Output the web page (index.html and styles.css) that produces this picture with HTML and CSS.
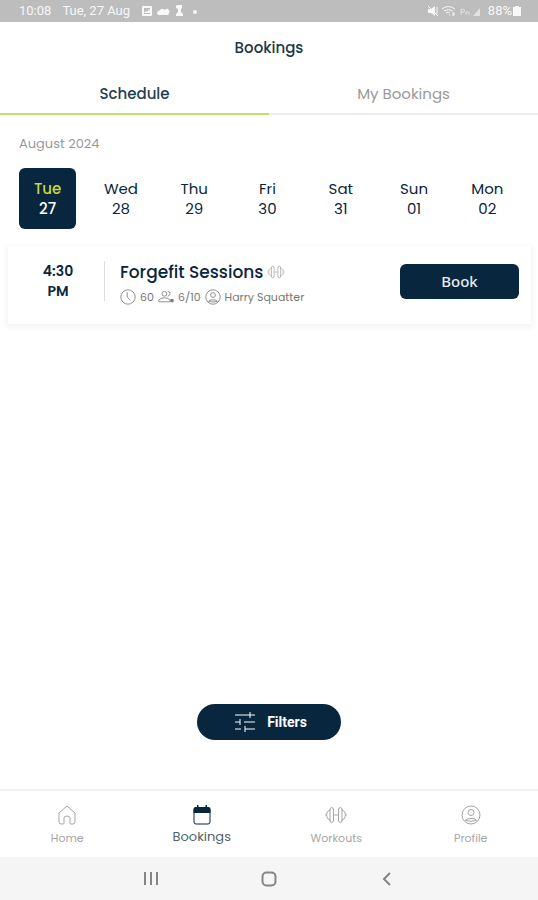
FILE: index.html
```html
<!DOCTYPE html>
<html lang="en">
<head>
<meta charset="utf-8">
<meta name="viewport" content="width=device-width, initial-scale=1">
<title>Bookings</title>
<link rel="stylesheet" href="styles.css">
</head>
<body>
<svg class="defs" aria-hidden="true">
  <symbol id="dumbbell" viewBox="0 0 22 18">
    <path d="M8.500 9h5M8.500 3.500v11M13.500 3.500v11M5 3v12M17 3v12M5 4q0-2.500 1.750-2.500T8.500 4M5 14q0 2.500 1.750 2.500T8.500 14M13.500 4q0-2.500 1.750-2.500T17 4M13.500 14q0 2.500 1.750 2.500T17 14M5 4Q1.500 5 1.500 9T5 14M17 4q3.500 1 3.500 5T17 14M0 9h1.500M20.500 9H22"/>
  </symbol>
  <symbol id="person" viewBox="0 0 20 20">
    <circle cx="10" cy="10" r="9"/><circle cx="10" cy="7.500" r="3"/><path d="M4.500 15.500q0-2 5.500-2t5.500 2q-5.500 1.500-11 0z"/>
  </symbol>
</svg>
<div class="app">
  <div class="status">
    <span>10:08</span>
    <span class="status-date">Tue, 27 Aug</span>
    <svg class="status-left" viewBox="0 0 58 14" aria-hidden="true">
      <path fill-rule="evenodd" d="M2 2h8q1 0 1 1v8q0 1-1 1H2q-1 0-1-1V3q0-1 1-1zM3 4v5l2-2 1 1 2-3 1 2V4zM3 10h6v-1H3z"/>
      <path d="M18 11a2 2 0 0 1 0-4 4 4 0 0 1 6-1 2.500 2.500 0 0 1 4 3q0 2-1 2z"/>
      <path d="M36 1h5v3l-1 1v3l2 2v2h-7v-2l2-2V5l-2-1V2z"/>
      <circle cx="54" cy="8" r="2"/>
    </svg>
    <svg class="status-right" viewBox="0 0 56 14" aria-hidden="true">
      <path d="M1 5h3l4-3v10L4 9H1z"/><path class="line" d="M1 2l10 10M10 3v7"/>
      <path class="line" d="M15 5q6-5 13 0M17 7q4-3 9 0M19 9q2-2 4 0M22 11h1M26 8v4l2-3"/>
      <path class="line dim" d="M34 11V5q5 0 3 3h-3M39 11V8h3v3"/>
      <path class="dim" d="M53 4v8h-7z"/>
    </svg>
    <span>88%</span>
    <svg class="battery" viewBox="0 0 8 12" aria-hidden="true"><path d="M2 2V1h4v1h2v9H0V2z"/></svg>
  </div>
  <header class="header"><h1>Bookings</h1></header>
  <nav class="tabs" aria-label="Views">
    <a class="tab tab-on" href="#schedule">Schedule</a>
    <a class="tab" href="#mine">My Bookings</a>
  </nav>
  <main class="main">
    <h2 class="month">August 2024</h2>
    <div class="days">
      <button class="day day-on"><span class="day-name">Tue</span><span>27</span></button>
      <button class="day"><span>Wed</span><span>28</span></button>
      <button class="day"><span>Thu</span><span>29</span></button>
      <button class="day"><span>Fri</span><span>30</span></button>
      <button class="day"><span>Sat</span><span>31</span></button>
      <button class="day"><span>Sun</span><span>01</span></button>
      <button class="day"><span>Mon</span><span>02</span></button>
    </div>
    <article class="card">
      <div class="time"><span>4:30</span><span>PM</span></div>
      <div class="info">
        <h3 class="title">Forgefit Sessions <svg class="title-icon" aria-hidden="true"><use href="#dumbbell"/></svg></h3>
        <div class="meta">
          <svg class="meta-icon" viewBox="0 0 20 20" aria-hidden="true"><circle cx="10" cy="10" r="9"/><path d="M9 4v6l4 4"/></svg>
          <span>60</span>
          <svg class="meta-icon" viewBox="0 0 20 20" aria-hidden="true"><circle cx="8" cy="6" r="3"/><path d="M1 16v-2q2-3 7-3t7 3v2zM12 3q4 0 3 3t-3 3"/><path class="solid" d="M16 13h3v3h-3z"/></svg>
          <span>6/10</span>
          <svg class="meta-icon" aria-hidden="true"><use href="#person"/></svg>
          <span>Harry Squatter</span>
        </div>
      </div>
      <button class="book">Book</button>
    </article>
    <button class="filters">
      <svg class="filters-icon" viewBox="0 0 20 20" aria-hidden="true"><path d="M0 3h12M15 3h5M15 0v6M12 3h3M0 10h5M5 7v6M9 10h11M0 17h6M10 14v6M10 17h10"/></svg>
      Filters
    </button>
  </main>
  <nav class="bottom" aria-label="Main">
    <a class="item" href="#home">
      <svg class="item-icon" viewBox="0 0 20 20" aria-hidden="true"><path d="M2 8l8-7 8 7v9q0 2-2 2h-2q-1 0-1-1v-5q0-2-3-2t-3 2v5q0 1-1 1H4q-2 0-2-2z"/></svg>
      <span>Home</span></a>
    <a class="item item-on" href="#bookings">
      <svg class="item-icon" viewBox="0 0 20 20" aria-hidden="true"><rect x="2" y="3" width="16" height="16" rx="2"/><path class="band" d="M1.500 8V4q0-2 2-2H5V0h1.500v2h7V0H15v2h1.500q2 0 2 2v4z"/></svg>
      <span>Bookings</span></a>
    <a class="item" href="#workouts">
      <svg class="item-icon wide" aria-hidden="true"><use href="#dumbbell"/></svg>
      <span>Workouts</span></a>
    <a class="item" href="#profile">
      <svg class="item-icon" aria-hidden="true"><use href="#person"/></svg>
      <span>Profile</span></a>
  </nav>
  <div class="system">
    <button class="key" aria-label="Recent apps"><svg viewBox="0 0 16 16"><path d="M2 1v13M8 1v13M14 1v13"/></svg></button>
    <button class="key" aria-label="Home screen"><svg viewBox="0 0 16 16"><rect x="1.500" y="1.500" width="13" height="13" rx="4"/></svg></button>
    <button class="key" aria-label="Back"><svg viewBox="0 0 16 16"><path d="M11 2L5 8l6 6"/></svg></button>
  </div>
</div>
</body>
</html>
```
FILE: styles.css
```css
* { box-sizing: border-box; }
body {
  margin: 0;
  background: #fff;
  color: #08263d;
  font-family: Poppins, Inter, "Noto Sans", sans-serif;
  font-size: 14px;
}
h1, h2, h3 { margin: 0; font-weight: 500; }
a { color: inherit; text-decoration: none; }
button { padding: 0; border: 0; background: none; color: inherit; font: inherit; }
svg { display: block; flex: none; fill: none; stroke: currentColor; }
.defs { position: absolute; width: 0; height: 0; }
.solid { fill: currentColor; }
.band { fill: currentColor; stroke: none; }

.app { display: flex; flex-direction: column; min-height: 100vh; }

.status {
  display: flex;
  align-items: center;
  height: 22px;
  padding: 0 17px 0 19px;
  background: #bdbdbd;
  color: #f8f8f8;
  font: 13px/22px Roboto, sans-serif;
}
.status svg { fill: currentColor; stroke: none; }
.status .line { fill: none; stroke: currentColor; }
.dim { opacity: .6; }
.status-date { margin: 0 11px; }
.status-left { width: 58px; height: 14px; }
.status-right { width: 56px; height: 14px; margin: 0 5px 0 auto; }
.battery { width: 8px; height: 12px; margin-left: 1px; }

.header { padding: 14px 0 13px; text-align: center; }
.header h1 { color: #1c3749; font-size: 15px; line-height: 24px; }

.tabs { display: flex; }
.tab {
  flex: 1;
  padding: 10px 0 8px;
  border-bottom: 2px solid #ededed;
  color: #999;
  font-size: 15px;
  line-height: 22px;
  text-align: center;
}
.tab-on { border-color: #cbdc64; color: #243f50; font-weight: 500; }

.main { display: flex; flex: 1; flex-direction: column; padding-top: 19px; }
.month { padding: 0 19px; color: #999; font-size: 13px; font-weight: 400; line-height: 20px; }
.days {
  display: grid;
  grid-template-columns: repeat(7, 1fr);
  justify-items: center;
  padding: 14px 14px 0 11px;
}
.day {
  display: flex;
  flex-direction: column;
  align-items: center;
  width: 57px;
  padding: 11px 0 10px;
  border-radius: 6px;
  font-size: 15px;
  line-height: 20px;
}
.day-on { background: #08263d; color: #fff; font-weight: 500; }
.day-name { color: #c5d940; }

.card {
  display: flex;
  align-items: flex-start;
  margin: 17px 7px 0 8px;
  padding: 15px 12px 19px 0;
  box-shadow: 0 2px 6px 2px #f5f5f5;
}
.time {
  display: flex;
  flex-direction: column;
  align-items: center;
  width: 97px;
  padding-left: 4px;
  border-right: 1px solid #dedede;
  font-weight: 600;
  line-height: 20px;
}
.info { flex: 1; padding-left: 15px; }
.title { display: flex; align-items: center; gap: 4px; font-size: 17px; line-height: 22px; }
.title-icon { width: 18px; height: 14px; color: #aaa; }
.meta { display: flex; align-items: center; gap: 4px; margin-top: 6px; color: #777; font-size: 11px; line-height: 16px; }
.meta-icon { width: 16px; height: 16px; }
.book {
  width: 119px;
  margin-top: 3px;
  border-radius: 6px;
  background: #08263d;
  color: #e8eef2;
  font-family: "Noto Sans", sans-serif;
  font-size: 15px;
  font-weight: 500;
  line-height: 35px;
}

.filters {
  display: flex;
  align-items: center;
  align-self: center;
  justify-content: center;
  gap: 12px;
  width: 144px;
  margin: auto 0 49px;
  padding-left: 4px;
  border-radius: 18px;
  background: #08263d;
  color: #fff;
  font-family: Roboto, sans-serif;
  font-weight: 700;
  line-height: 36px;
}
.filters-icon { width: 20px; height: 20px; }

.bottom { display: flex; border-top: 2px solid #f2f2f2; }
.item {
  display: flex;
  flex: 1;
  flex-direction: column;
  align-items: center;
  gap: 5px;
  padding: 14px 0 11px;
  color: #a5a5a5;
  font-size: 11px;
  line-height: 16px;
}
.item-icon { width: 20px; height: 20px; }
.wide { width: 22px; }
.item-on { gap: 2px; padding-bottom: 9px; color: #08263d; font-size: 13px; line-height: 20px; }
.item-on span { color: #52616c; }

.system { display: flex; justify-content: center; background: #f5f5f5; }
.key { display: flex; justify-content: center; width: 118px; padding: 14px 0 13px; color: #858585; }
.key svg { width: 16px; height: 16px; stroke-width: 2px; }
```
